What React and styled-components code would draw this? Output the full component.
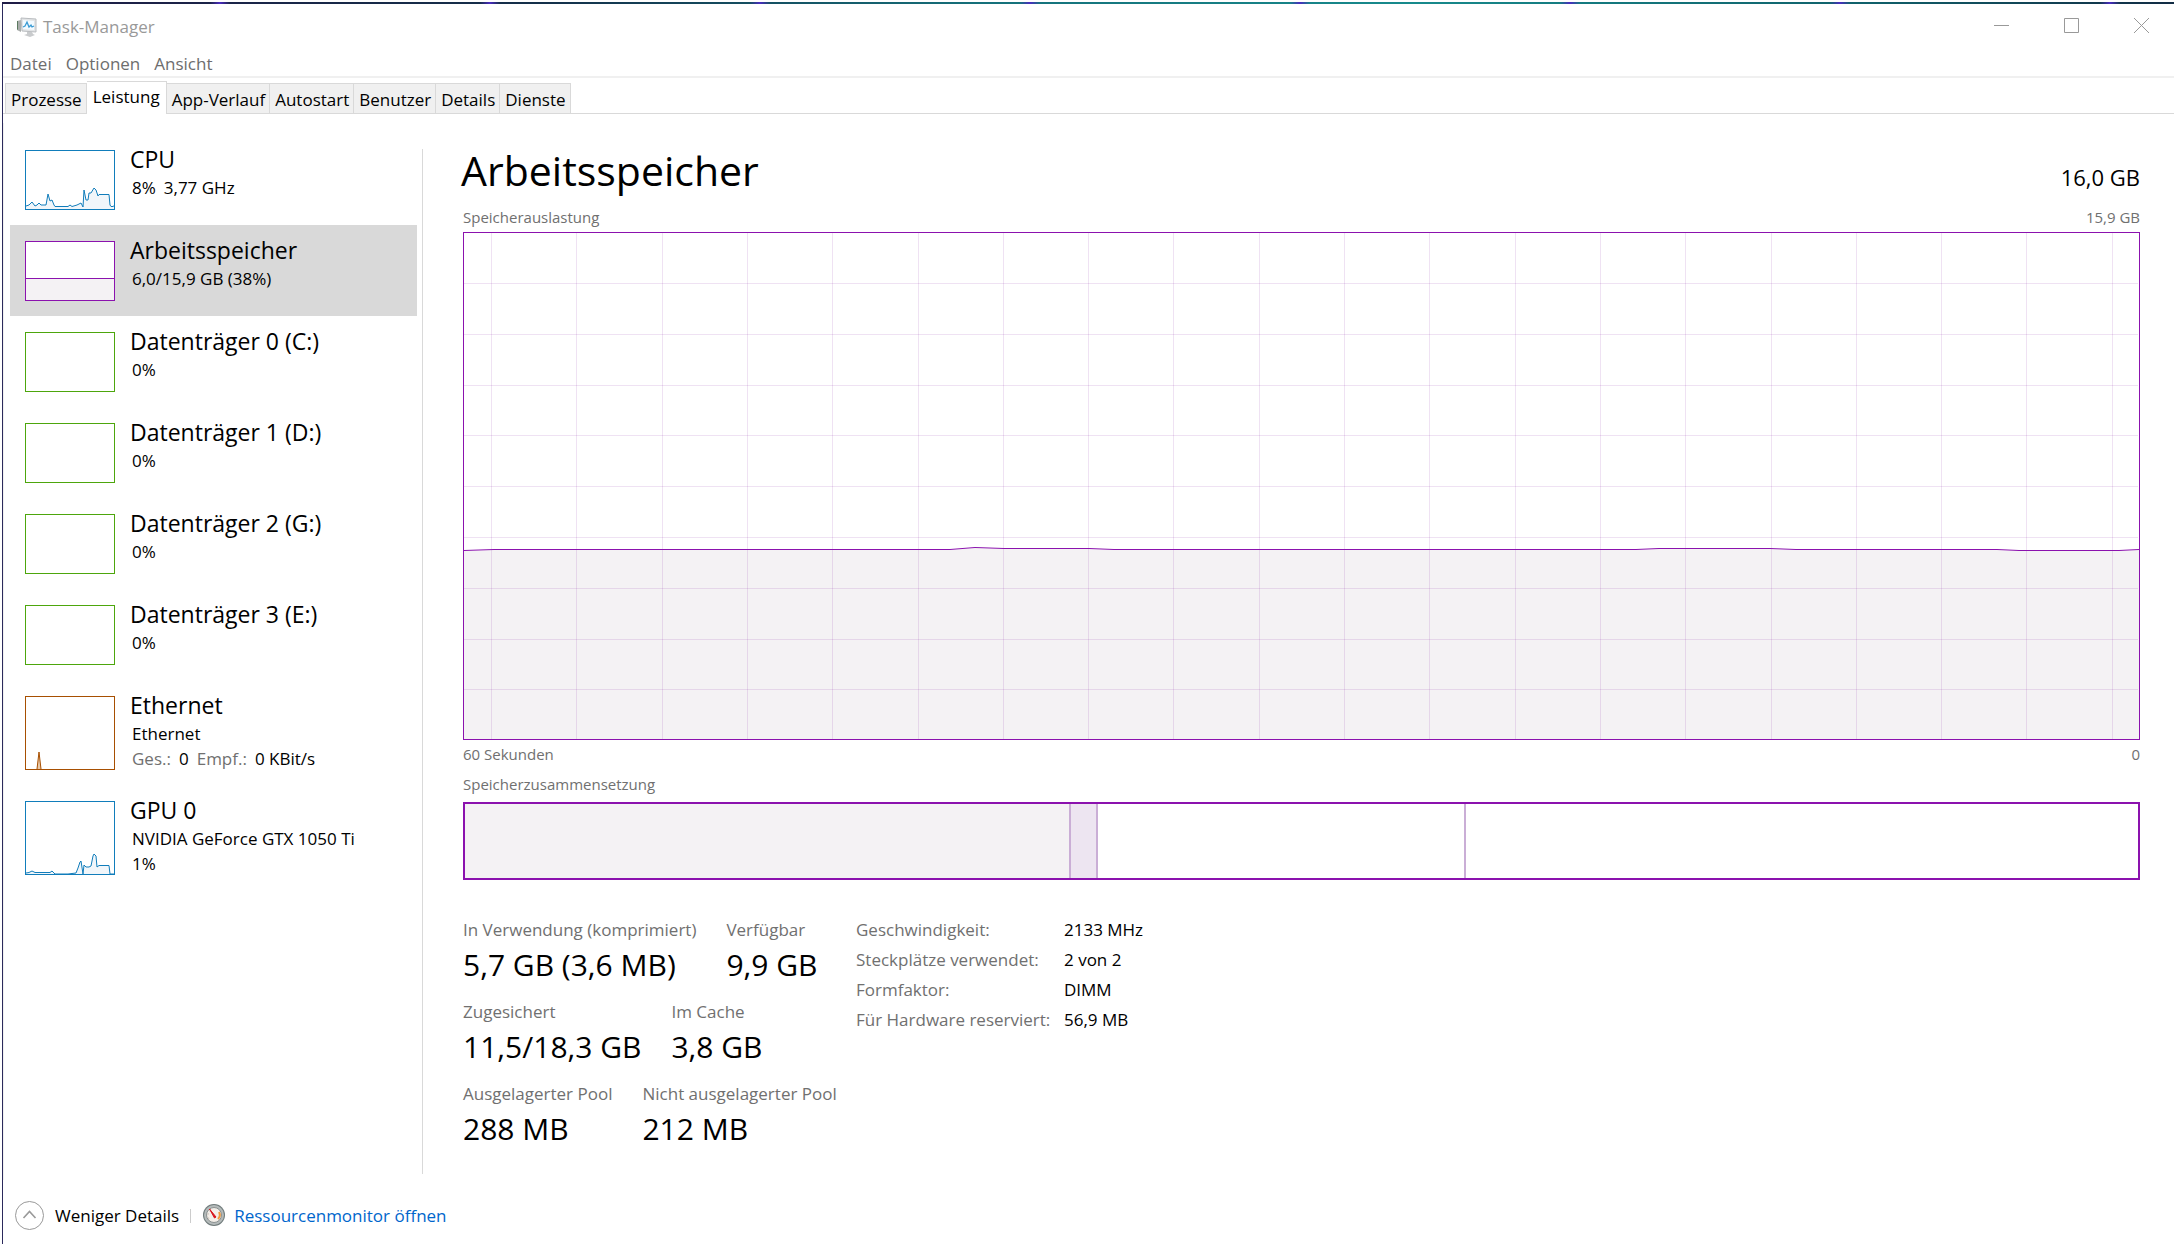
import React from 'react'
import styled, { createGlobalStyle, css } from 'styled-components'

const colors = {
  cpu: '#117dbb',
  cpuFill: '#f1f6fa',
  memory: '#8b12ae',
  memoryFill: '#f4f2f4',
  memoryGrid: 'rgba(130, 30, 160, 0.13)',
  disk: '#4da60c',
  ethernet: '#a74f01',
  label: '#707070',
  line: '#d9d9d9',
}

const GlobalStyle = createGlobalStyle`
  * {
    box-sizing: border-box;
  }
  body {
    margin: 0;
    background: #fff;
    color: #000;
    font: 17px/24px 'Open Sans', 'Noto Sans', sans-serif;
  }
  button {
    border: 0;
    padding: 0;
    background: none;
    color: inherit;
    font: inherit;
    text-align: left;
  }
  svg {
    display: block;
  }
`

const Window = styled.div`
  display: flex;
  flex-direction: column;
  min-height: 100vh;
  padding: 2px 0 0 2px;
`

const Desktop = styled.div`
  height: 2px;
  background: repeating-linear-gradient(
      to right,
      transparent 0 208px,
      #4a2bc0 218px,
      transparent 228px 270px
    ),
    linear-gradient(to right, #1f1c46, #14304a 25%, #15707a 45%, #178a8c 65%, #10606a 86%, #122c44);
`

const Frame = styled.div`
  flex: 1;
  display: flex;
  flex-direction: column;
  border-left: 1px solid #2b2a5c;
`

// Title bar
const TitleBar = styled.header`
  display: flex;
  align-items: center;
  height: 46px;
  padding-left: 13px;
  color: #999;
`

const WindowTitle = styled.span`
  flex: 1;
  margin-left: 6px;
`

const WindowButtons = styled.div`
  display: flex;
  gap: 4px;
  margin-bottom: 3px;
`

const WindowButton = styled.button`
  display: flex;
  align-items: center;
  justify-content: center;
  width: 66px;
  height: 40px;
`

// Menu and tabs
const Menu = styled.nav`
  display: flex;
  align-items: center;
  gap: 14px;
  height: 28px;
  padding: 2px 0 0 7px;
  border-bottom: 2px solid #f0f0f0;
  color: #6d6d6d;
`

const Tabs = styled.div`
  display: flex;
  align-items: flex-end;
  height: 36px;
  padding-left: 2px;
  border-bottom: 1px solid ${colors.line};
`

const Tab = styled.button`
  height: 30px;
  padding: 2px 4px 0 5px;
  border: 1px solid ${colors.line};
  border-width: 1px 1px 0 0;
  background: #f0f0f0;
  &:first-child {
    border-left-width: 1px;
  }
  ${({ $active }) =>
    $active &&
    css`
      height: 33px;
      padding: 0 6px 3px;
      margin-bottom: -1px;
      background: #fff;
    `};
`

const Body = styled.div`
  flex: 1;
  display: flex;
  margin-top: 9px;
  border-left: 1px solid #f0f0f0;
`

// Sidebar
const Sidebar = styled.aside`
  flex: 0 0 418px;
  padding: 11px 5px 0 6px;
`

const Item = styled.button`
  display: flex;
  align-items: flex-start;
  gap: 15px;
  width: 100%;
  padding: 16px 15px 15px;
  background: ${({ $active }) => ($active ? '#d9d9d9' : 'none')};
`

const ItemText = styled.span`
  display: block;
  margin: -7px 0 -15px;
`

const ItemName = styled.span`
  display: block;
  font-size: 23px;
  line-height: 32px;
`

const ItemLine = styled.span`
  display: flex;
  gap: 8px;
  padding-left: 2px;
  line-height: 25px;
`

const Muted = styled.span`
  color: ${colors.label};
`

const Divider = styled.div`
  width: 1px;
  margin: 26px 0 6px;
  background: ${colors.line};
`

// Main panel
const Main = styled.main`
  flex: 1;
  display: flex;
  flex-direction: column;
  min-width: 0;
  padding: 19px 34px 31px 40px;
`

const Heading = styled.div`
  display: flex;
  align-items: baseline;
  justify-content: space-between;
  margin-bottom: 9px;
`

const Title = styled.h1`
  margin: 0 0 0 -2px;
  font-size: 41px;
  font-weight: 400;
  line-height: 56px;
`

const Total = styled.span`
  font-size: 22px;
`

const Caption = styled.div`
  display: flex;
  justify-content: space-between;
  color: ${colors.label};
  font-size: 15px;
  line-height: 20px;
`

const ChartBox = styled.div`
  flex: 1;
  display: flex;
  min-height: 300px;
  margin: 5px 0 4px;
  border: 1px solid ${colors.memory};
  svg {
    flex: 1;
    width: 100%;
    height: auto;
    min-height: 0;
  }
`

const CompositionCaption = styled(Caption)`
  margin: 10px 0 8px;
`

const Composition = styled.div`
  display: flex;
  height: 78px;
  border: 2px solid ${colors.memory};
`

const Segment = styled.div`
  flex: ${({ $size }) => $size} 0 0;
  background: ${({ $fill }) => $fill || '#fff'};
  & + & {
    border-left: 2px solid #caaed6;
  }
`

const Stats = styled.div`
  display: flex;
  align-items: flex-start;
  margin-top: 38px;
`

const Metrics = styled.div`
  display: flex;
  flex-direction: column;
  gap: 15px;
  width: 393px;
`

const MetricRow = styled.dl`
  display: flex;
  gap: 30px;
  margin: 0;
`

const MetricLabel = styled.dt`
  margin-bottom: 3px;
  color: ${colors.label};
  white-space: nowrap;
`

const MetricValue = styled.dd`
  margin: 0;
  font-size: 30px;
  line-height: 40px;
  white-space: nowrap;
`

const Hardware = styled.table`
  border-collapse: collapse;
  th,
  td {
    padding: 0 0 6px;
    font-weight: 400;
    text-align: left;
  }
  th {
    width: 208px;
    color: ${colors.label};
  }
`

// Footer
const Footer = styled.footer`
  display: flex;
  align-items: center;
  height: 64px;
  padding: 7px 12px 0;
`

const Fewer = styled.button`
  display: flex;
  align-items: center;
  gap: 11px;
`

const Separator = styled.span`
  width: 1px;
  height: 14px;
  margin: 0 11px;
  background: #ccc;
`

const MonitorLink = styled.a`
  display: flex;
  align-items: center;
  gap: 8px;
  color: #0066cc;
  text-decoration: none;
`

const TaskManagerIcon = () => (
  <svg width="21" height="20" viewBox="0 0 21 20">
    <path d="M1 4l4-1v12l-4-2z" fill="#a9adab" />
    <path d="M1 4l1 0v9l-1-1z" fill="#5c7a60" />
    <path d="M5 1l15 1v13l-14-1z" fill="#e2e4e6" stroke="#b9bcbf" />
    <path d="M7 3l11 1v9l-11-1z" fill="#f2faff" />
    <path d="M7 10l2-1 2-4 2 5 2-2 1 2 2-1" fill="none" stroke="#3a9bd4" strokeWidth="1.3" />
    <path d="M11 15h5l1 2 2 1-5 2-6-2 3-1z" fill="#c9cbcd" />
  </svg>
)

const GaugeIcon = () => (
  <svg width="24" height="24" viewBox="0 0 24 24">
    <circle cx="12" cy="11" r="11" fill="#6f7a7a" />
    <circle cx="12" cy="11" r="10" fill="#b4baba" />
    <circle cx="12" cy="11" r="7.5" fill="#f3eee8" stroke="#8b9191" />
    <path d="M17 8a6 6 0 0 1-1 7" fill="none" stroke="#f0973a" strokeWidth="2" />
    <path d="M7 15a6 6 0 0 1 1-8" fill="none" stroke="#cfc6bd" strokeDasharray="2 2" />
    <path d="M7.500 5l6.500 8-1.500 1z" fill="#d8141c" stroke="#d8141c" />
  </svg>
)

const Thumb = ({ color, fill, height = 60, points }) => (
  <svg width="90" height={height} viewBox={`0 0 90 ${height}`}>
    <rect x="0.5" y="0.5" width="89" height={height - 1} fill="#fff" />
    {points && (
      <>
        <polygon points={`0,${height} ${points} 90,${height}`} fill={fill} />
        <polyline points={points} fill="none" stroke={color} />
      </>
    )}
    <rect x="0.5" y="0.5" width="89" height={height - 1} fill="none" stroke={color} />
  </svg>
)

const usage =
  '0,318 30,317 486,317 511,315 540,316 625,316 650,317 1172,317 1195,316 1306,316 1332,317 1533,317 1555,318 1655,318 1675,317'
const columns = Array.from({ length: 20 }, (_, i) => Math.round(27 + i * 85.3))
const rows = Array.from({ length: 9 }, (_, i) => Math.round(50 + i * 50.8))

const UsageChart = () => (
  <svg viewBox="0 0 1675 506" preserveAspectRatio="none">
    <polygon points={`0,506 ${usage} 1675,506`} fill={colors.memoryFill} />
    <g stroke={colors.memoryGrid} shapeRendering="crispEdges">
      {columns.map(x => (
        <line key={x} x1={x + 0.5} x2={x + 0.5} y1="0" y2="506" />
      ))}
      {rows.map(y => (
        <line key={y} x1="0" x2="1674" y1={y + 0.5} y2={y + 0.5} />
      ))}
    </g>
    <polyline
      points={usage}
      fill="none"
      stroke={colors.memory}
      vectorEffect="non-scaling-stroke"
      transform="translate(0 -0.5)"
    />
  </svg>
)

const cpuPoints =
  '1,56 4,55 7,52 10,56 12,55 14,53 16,55 21,55 23,44 25,51 27,50 29,55 30,56.5 43,56.5 45,55 47,56.5 52,55 56,53 58,57 59,40 61,50 63,50 64,43 66,43 69,38 71,40 73,46 74,44.5 84,44.5 85,55 86,56.5 88,56.5 90,55'
const gpuPoints =
  '1,72 4,71.5 7,70 10,71.5 25,71.5 27,70 30,73 43,73 51,72 53,67 55,61 56,60 58,73 59,64 61,66 64,66 66,65 68,55 69,53 71,55 72,66 74,64.5 84,64.5 85,73 90,73'

const tabs = ['Prozesse', 'Leistung', 'App-Verlauf', 'Autostart', 'Benutzer', 'Details', 'Dienste']

const disks = [
  'Datenträger 0 (C:)',
  'Datenträger 1 (D:)',
  'Datenträger 2 (G:)',
  'Datenträger 3 (E:)',
]

const metrics = [
  [['In Verwendung (komprimiert)', '5,7 GB (3,6 MB)'], ['Verfügbar', '9,9 GB']],
  [['Zugesichert', '11,5/18,3 GB'], ['Im Cache', '3,8 GB']],
  [['Ausgelagerter Pool', '288 MB'], ['Nicht ausgelagerter Pool', '212 MB']],
]

const hardware = [
  ['Geschwindigkeit:', '2133 MHz'],
  ['Steckplätze verwendet:', '2 von 2'],
  ['Formfaktor:', 'DIMM'],
  ['Für Hardware reserviert:', '56,9 MB'],
]

const App = () => (
  <>
    <GlobalStyle />
    <Window>
      <Desktop />
      <Frame>
        <TitleBar>
          <TaskManagerIcon />
          <WindowTitle>Task-Manager</WindowTitle>
          <WindowButtons>
            <WindowButton aria-label="Minimieren">
              <svg width="15" height="15" stroke="#999">
                <path d="M0 7.5h15" />
              </svg>
            </WindowButton>
            <WindowButton aria-label="Maximieren">
              <svg width="15" height="15" stroke="#999" fill="none">
                <path d="M0.5 0.5h14v14h-14z" />
              </svg>
            </WindowButton>
            <WindowButton aria-label="Schließen">
              <svg width="15" height="15" stroke="#999">
                <path d="M0 0l15 15M15 0l-15 15" />
              </svg>
            </WindowButton>
          </WindowButtons>
        </TitleBar>
        <Menu>
          <button>Datei</button>
          <button>Optionen</button>
          <button>Ansicht</button>
        </Menu>
        <Tabs role="tablist">
          {tabs.map(tab => (
            <Tab key={tab} role="tab" aria-selected={tab === 'Leistung'} $active={tab === 'Leistung'}>
              {tab}
            </Tab>
          ))}
        </Tabs>
        <Body>
          <Sidebar>
            <Item>
              <Thumb color={colors.cpu} fill={colors.cpuFill} points={cpuPoints} />
              <ItemText>
                <ItemName>CPU</ItemName>
                <ItemLine>
                  <span>8%</span>
                  <span>3,77 GHz</span>
                </ItemLine>
              </ItemText>
            </Item>
            <Item $active>
              <Thumb color={colors.memory} fill={colors.memoryFill} points="0,37.5 90,37.5" />
              <ItemText>
                <ItemName>Arbeitsspeicher</ItemName>
                <ItemLine>6,0/15,9 GB (38%)</ItemLine>
              </ItemText>
            </Item>
            {disks.map(disk => (
              <Item key={disk}>
                <Thumb color={colors.disk} />
                <ItemText>
                  <ItemName>{disk}</ItemName>
                  <ItemLine>0%</ItemLine>
                </ItemText>
              </Item>
            ))}
            <Item>
              <Thumb color={colors.ethernet} fill="#e9c9a8" height={74} points="12,73 14,56 16,73" />
              <ItemText>
                <ItemName>Ethernet</ItemName>
                <ItemLine>Ethernet</ItemLine>
                <ItemLine>
                  <Muted>Ges.:</Muted>
                  <span>0</span>
                  <Muted>Empf.:</Muted>
                  <span>0 KBit/s</span>
                </ItemLine>
              </ItemText>
            </Item>
            <Item>
              <Thumb color={colors.cpu} fill={colors.cpuFill} height={74} points={gpuPoints} />
              <ItemText>
                <ItemName>GPU 0</ItemName>
                <ItemLine>NVIDIA GeForce GTX 1050 Ti</ItemLine>
                <ItemLine>1%</ItemLine>
              </ItemText>
            </Item>
          </Sidebar>
          <Divider />
          <Main>
            <Heading>
              <Title>Arbeitsspeicher</Title>
              <Total>16,0 GB</Total>
            </Heading>
            <Caption>
              <span>Speicherauslastung</span>
              <span>15,9 GB</span>
            </Caption>
            <ChartBox>
              <UsageChart />
            </ChartBox>
            <Caption>
              <span>60 Sekunden</span>
              <span>0</span>
            </Caption>
            <CompositionCaption>Speicherzusammensetzung</CompositionCaption>
            <Composition>
              <Segment $size={604} $fill={colors.memoryFill} />
              <Segment $size={25} $fill="#ede5f1" />
              <Segment $size={366} />
              <Segment $size={672} />
            </Composition>
            <Stats>
              <Metrics>
                {metrics.map(row => (
                  <MetricRow key={row[0][0]}>
                    {row.map(([label, value]) => (
                      <div key={label}>
                        <MetricLabel>{label}</MetricLabel>
                        <MetricValue>{value}</MetricValue>
                      </div>
                    ))}
                  </MetricRow>
                ))}
              </Metrics>
              <Hardware>
                <tbody>
                  {hardware.map(([label, value]) => (
                    <tr key={label}>
                      <th scope="row">{label}</th>
                      <td>{value}</td>
                    </tr>
                  ))}
                </tbody>
              </Hardware>
            </Stats>
          </Main>
        </Body>
        <Footer>
          <Fewer>
            <svg width="29" height="29" fill="none" stroke="#999">
              <circle cx="14.5" cy="14.5" r="14" />
              <path d="M8.5 17l6-6.5 6 6.5" strokeWidth="1.6" />
            </svg>
            Weniger Details
          </Fewer>
          <Separator />
          <MonitorLink href="#ressourcenmonitor">
            <GaugeIcon />
            Ressourcenmonitor öffnen
          </MonitorLink>
        </Footer>
      </Frame>
    </Window>
  </>
)

export default App
